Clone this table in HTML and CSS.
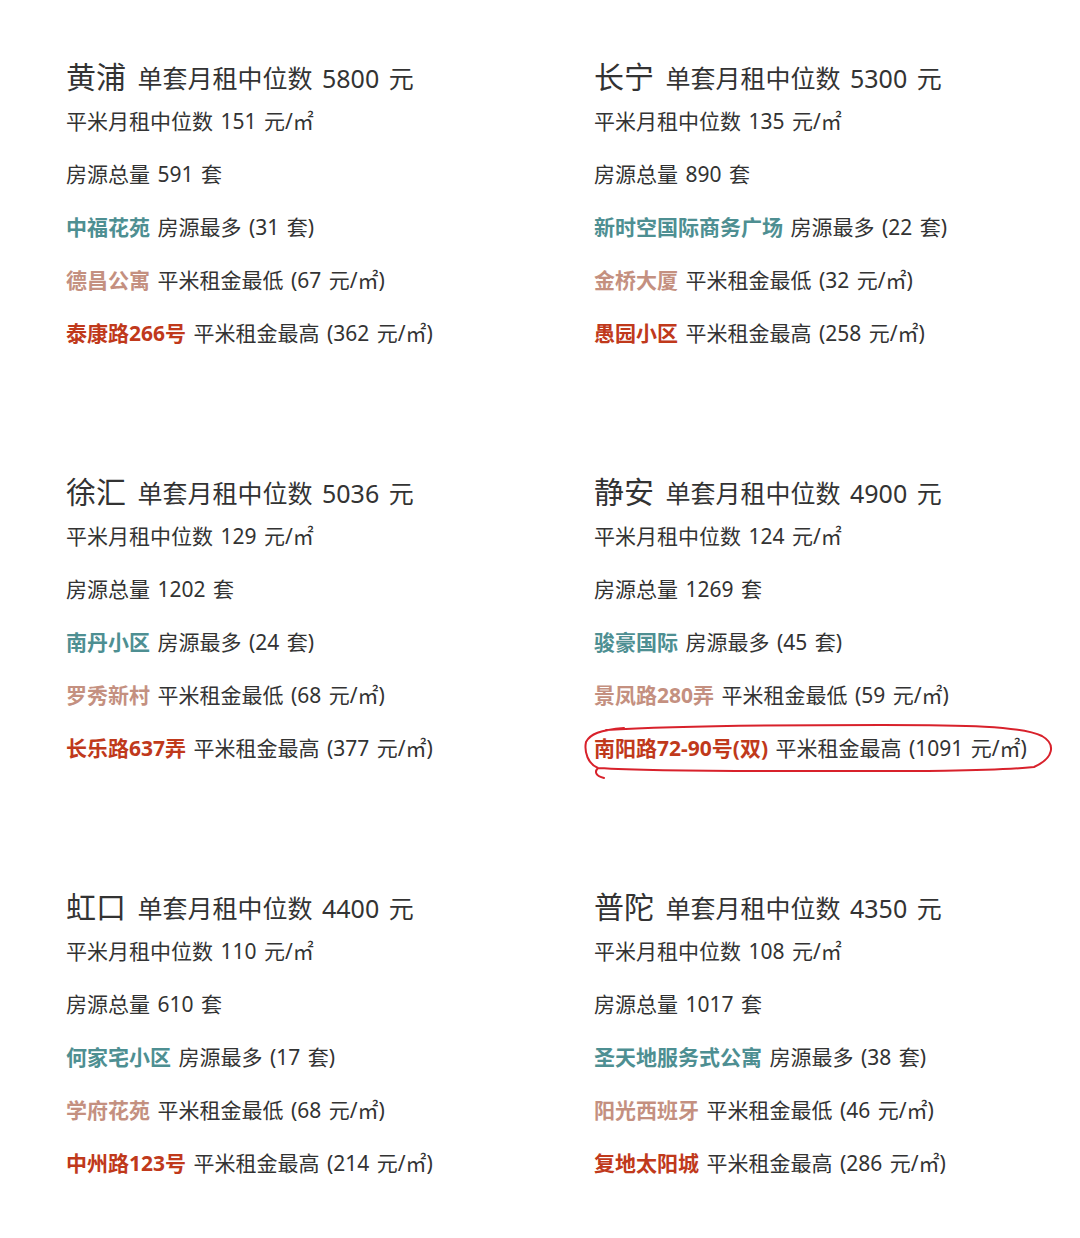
FILE: index.html
```html
<!DOCTYPE html>
<html>
<head>
    <meta charset="utf-8">
    <title>上海各区租金</title>
    <link rel="stylesheet" href="styles.css">
</head>
<body>
    <div class="grid">
        <div class="district">
            <div class="title"><span class="name">黄浦</span> 单套月租中位数 5800 元</div>
            <div class="row">平米月租中位数 151 元/㎡</div>
            <div class="row">房源总量 591 套</div>
            <div class="row"><b class="most">中福花苑</b> 房源最多 (31 套)</div>
            <div class="row"><b class="low">德昌公寓</b> 平米租金最低 (67 元/㎡)</div>
            <div class="row"><b class="high">泰康路266号</b> 平米租金最高 (362 元/㎡)</div>
        </div>
        <div class="district">
            <div class="title"><span class="name">长宁</span> 单套月租中位数 5300 元</div>
            <div class="row">平米月租中位数 135 元/㎡</div>
            <div class="row">房源总量 890 套</div>
            <div class="row"><b class="most">新时空国际商务广场</b> 房源最多 (22 套)</div>
            <div class="row"><b class="low">金桥大厦</b> 平米租金最低 (32 元/㎡)</div>
            <div class="row"><b class="high">愚园小区</b> 平米租金最高 (258 元/㎡)</div>
        </div>
        <div class="district">
            <div class="title"><span class="name">徐汇</span> 单套月租中位数 5036 元</div>
            <div class="row">平米月租中位数 129 元/㎡</div>
            <div class="row">房源总量 1202 套</div>
            <div class="row"><b class="most">南丹小区</b> 房源最多 (24 套)</div>
            <div class="row"><b class="low">罗秀新村</b> 平米租金最低 (68 元/㎡)</div>
            <div class="row"><b class="high">长乐路637弄</b> 平米租金最高 (377 元/㎡)</div>
        </div>
        <div class="district">
            <div class="title"><span class="name">静安</span> 单套月租中位数 4900 元</div>
            <div class="row">平米月租中位数 124 元/㎡</div>
            <div class="row">房源总量 1269 套</div>
            <div class="row"><b class="most">骏豪国际</b> 房源最多 (45 套)</div>
            <div class="row"><b class="low">景凤路280弄</b> 平米租金最低 (59 元/㎡)</div>
            <div class="row marked">
                <b class="high">南阳路72-90号(双)</b> 平米租金最高 (1091 元/㎡)
                <svg class="circle" width="474" height="60" viewBox="0 0 474 60">
                    <path d="M24 8 C 90 4, 200 3, 300 3 C 380 3, 440 4, 460 14 C 474 22, 472 36, 452 45 C 400 50, 300 49, 200 49 C 120 49, 50 48, 16 46 C 6 42, 2 30, 4 20 C 8 12, 18 8, 42 6 M16 46 C 12 50, 14 54, 22 56" fill="none" stroke="#d8212b" stroke-width="2" stroke-linecap="round"/>
                </svg>
            </div>
        </div>
        <div class="district">
            <div class="title"><span class="name">虹口</span> 单套月租中位数 4400 元</div>
            <div class="row">平米月租中位数 110 元/㎡</div>
            <div class="row">房源总量 610 套</div>
            <div class="row"><b class="most">何家宅小区</b> 房源最多 (17 套)</div>
            <div class="row"><b class="low">学府花苑</b> 平米租金最低 (68 元/㎡)</div>
            <div class="row"><b class="high">中州路123号</b> 平米租金最高 (214 元/㎡)</div>
        </div>
        <div class="district">
            <div class="title"><span class="name">普陀</span> 单套月租中位数 4350 元</div>
            <div class="row">平米月租中位数 108 元/㎡</div>
            <div class="row">房源总量 1017 套</div>
            <div class="row"><b class="most">圣天地服务式公寓</b> 房源最多 (38 套)</div>
            <div class="row"><b class="low">阳光西班牙</b> 平米租金最低 (46 元/㎡)</div>
            <div class="row"><b class="high">复地太阳城</b> 平米租金最高 (286 元/㎡)</div>
        </div>
    </div>
</body>
</html>
```

FILE: styles.css
```css
body {
    margin: 0;
    background: #fff;
    color: #333;
    font-family: "Noto Sans", "Noto Sans CJK SC", sans-serif;
}
.grid {
    display: grid;
    grid-template-columns: 528px 486px;
    row-gap: 113px;
    padding: 58px 0 0 66px;
}
.title {
    height: 37px;
    line-height: 37px;
    font-size: 25px;
    word-spacing: 3px;
    white-space: nowrap;
}
.name {
    font-size: 30px;
    margin-right: 2px;
}
.row {
    height: 53px;
    line-height: 53px;
    font-size: 21px;
    word-spacing: 2px;
    white-space: nowrap;
}
.row b {
    font-weight: 700;
}
.most {
    color: #4e8f92;
}
.low {
    color: #c49080;
}
.high {
    color: #c0391b;
}
.marked {
    position: relative;
}
.circle {
    position: absolute;
    left: -12px;
    top: 0;
}
```
